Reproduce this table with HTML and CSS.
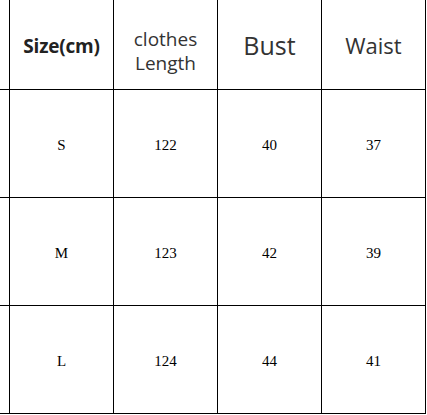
FILE: index.html
```html
<!DOCTYPE html>
<html>
<head>
<meta charset="utf-8">
<link rel="stylesheet" href="styles.css">
</head>
<body>
<div class="chart">
  <div class="cell edge head"></div>
  <div class="cell head"><span class="h-size">Size(cm)</span></div>
  <div class="cell head"><span class="h-len">clothes<br>Length</span></div>
  <div class="cell head"><span class="h-bust">Bust</span></div>
  <div class="cell head"><span class="h-waist">Waist</span></div>

  <div class="cell edge"></div>
  <div class="cell val">S</div>
  <div class="cell val">122</div>
  <div class="cell val">40</div>
  <div class="cell val">37</div>

  <div class="cell edge"></div>
  <div class="cell val">M</div>
  <div class="cell val">123</div>
  <div class="cell val">42</div>
  <div class="cell val">39</div>

  <div class="cell edge"></div>
  <div class="cell val">L</div>
  <div class="cell val">124</div>
  <div class="cell val">44</div>
  <div class="cell val">41</div>
</div>
</body>
</html>
```
FILE: styles.css
```css
html, body {
  margin: 0;
  padding: 0;
  background: #fff;
}
.chart {
  display: grid;
  grid-template-columns: 10px repeat(4, 104px);
  grid-template-rows: 90px repeat(3, 108px);
  width: 426px;
}
.cell {
  box-sizing: border-box;
  border-right: 1px solid #000;
  border-bottom: 1px solid #000;
  display: flex;
  align-items: center;
  justify-content: center;
  text-align: center;
}
.head {
  font-family: "Open Sans", "Noto Sans", sans-serif;
  color: #333;
}
.h-size {
  font-weight: 700;
  font-size: 19px;
  color: #222;
  letter-spacing: -0.2px;
  padding-top: 2px;
}
.h-len {
  font-size: 19px;
  line-height: 24px;
  padding-top: 12px;
}
.h-bust {
  font-size: 25px;
}
.h-waist {
  font-size: 22px;
}
.val {
  font-family: "Liberation Serif", "DejaVu Serif", serif;
  font-size: 15px;
  color: #000;
  padding-top: 3px;
}
```
